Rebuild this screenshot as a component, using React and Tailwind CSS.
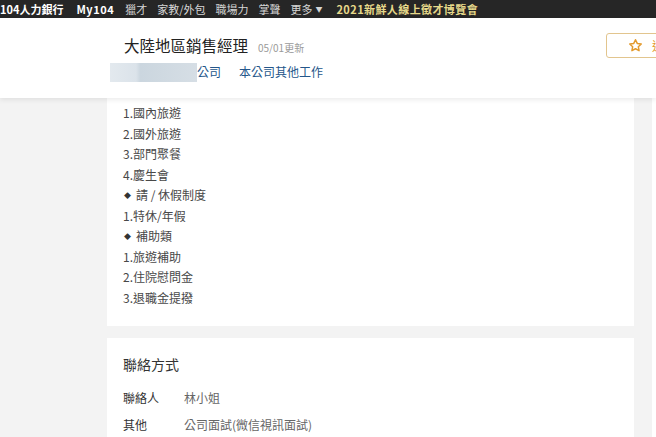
import React from "react";

const font = { fontFamily: '"Noto Sans CJK TC", "Noto Sans", Arial, sans-serif' };

const navItems = ["獵才", "家教/外包", "職場力", "掌聲"];

const benefits = [
  "1.國內旅遊",
  "2.國外旅遊",
  "3.部門聚餐",
  "4.慶生會",
  "◆請 / 休假制度",
  "1.特休/年假",
  "◆補助類",
  "1.旅遊補助",
  "2.住院慰問金",
  "3.退職金提撥",
];

function Star() {
  return (
    <svg width="15" height="15" viewBox="0 0 24 24" fill="none" stroke="#e39a2d" strokeWidth="2.4" strokeLinejoin="round">
      <path d="M12 2.8l2.8 5.9 6.4.8-4.7 4.4 1.2 6.4L12 17.2l-5.7 3.1 1.2-6.4-4.7-4.4 6.4-.8z" />
    </svg>
  );
}

function Line({ text }) {
  // bullet rows use a small diamond
  if (text.startsWith("◆")) {
    return (
      <div className="flex items-center">
        <span className="text-[7px] text-[#333] mr-[5px] ml-[1px]">◆</span>
        {text.slice(1)}
      </div>
    );
  }
  return <div>{text}</div>;
}

export default function App() {
  return (
    <div className="w-[656px] h-[437px] overflow-hidden bg-[#f3f3f3] flex flex-col" style={font}>
      {/* Top nav */}
      <div className="h-[18px] bg-[#262626] flex items-center text-[11px] leading-none shrink-0 whitespace-nowrap">
        <span className="font-bold text-white">104人力銀行</span>
        <span className="ml-[13px] font-bold text-white tracking-[0.5px]">My104</span>
        <div className="ml-[11px] flex gap-[10px] text-[#d6d6d6]">
          {navItems.map((n) => (
            <span key={n}>{n}</span>
          ))}
          <span className="flex items-center gap-[3px]">
            更多
            <span className="text-[7px]">▼</span>
          </span>
        </div>
        <span className="ml-[14px] font-bold text-[#e6d98a] tracking-[0.4px]">2021新鮮人線上徵才博覽會</span>
      </div>

      {/* Job header */}
      <div className="relative z-10 h-[80px] bg-white shadow-[0_2px_5px_rgba(0,0,0,0.08)] flex shrink-0">
        <div className="w-[606px] shrink-0 pl-[110px] pt-[15px]">
          <div className="flex items-baseline pl-[14px]">
            <span className="text-[15.5px] text-[#222] leading-[24px]">大陸地區銷售經理</span>
            <span className="ml-[10px] text-[10px] text-[#9a9a9a]">05/01更新</span>
          </div>
          <div className="flex items-center mt-[5px] text-[12px] text-[#24568a] leading-[20px]">
            <div className="w-[87px] h-[19px] bg-[linear-gradient(90deg,#e3e9ee_0%,#dbe3ea_30%,#cbd6df_35%,#cfd9e1_60%,#d6dee5_100%)]" />
            <span className="ml-[0px]">公司</span>
            <span className="ml-[18px]">本公司其他工作</span>
          </div>
        </div>
        <div className="mt-[15px] h-[25px] w-[80px] shrink-0 border border-[#e2c58e] rounded-[3px] flex items-center pl-[21px] gap-[9px]">
          <Star />
          <span className="text-[12px] text-[#e39a2d]">追蹤</span>
        </div>
      </div>

      {/* Body */}
      <div className="flex flex-1 min-h-0">
        <div className="w-[107px] shrink-0" />
        <div className="w-[527px] shrink-0 flex flex-col gap-[12px]">
          <div className="bg-white pl-[16px] pt-[5px] pb-[18px] text-[12px] text-[#484848] leading-[20.5px]">
            {benefits.map((b, i) => (
              <Line key={i} text={b} />
            ))}
          </div>
          <div className="bg-white flex-1 pl-[16px] pt-[16px]">
            <div className="text-[14px] text-[#333] leading-[20px]">聯絡方式</div>
            <div className="mt-[14px] flex text-[12px] leading-[20px]">
              <span className="w-[61px] text-[#333]">聯絡人</span>
              <span className="text-[#666]">林小姐</span>
            </div>
            <div className="mt-[7px] flex text-[12px] leading-[20px]">
              <span className="w-[61px] text-[#333]">其他</span>
              <span className="text-[#666]">公司面試(微信視訊面試)</span>
            </div>
          </div>
        </div>
        <div className="w-[18px] shrink-0" />
        <div className="flex-1 bg-white" />
      </div>
    </div>
  );
}
